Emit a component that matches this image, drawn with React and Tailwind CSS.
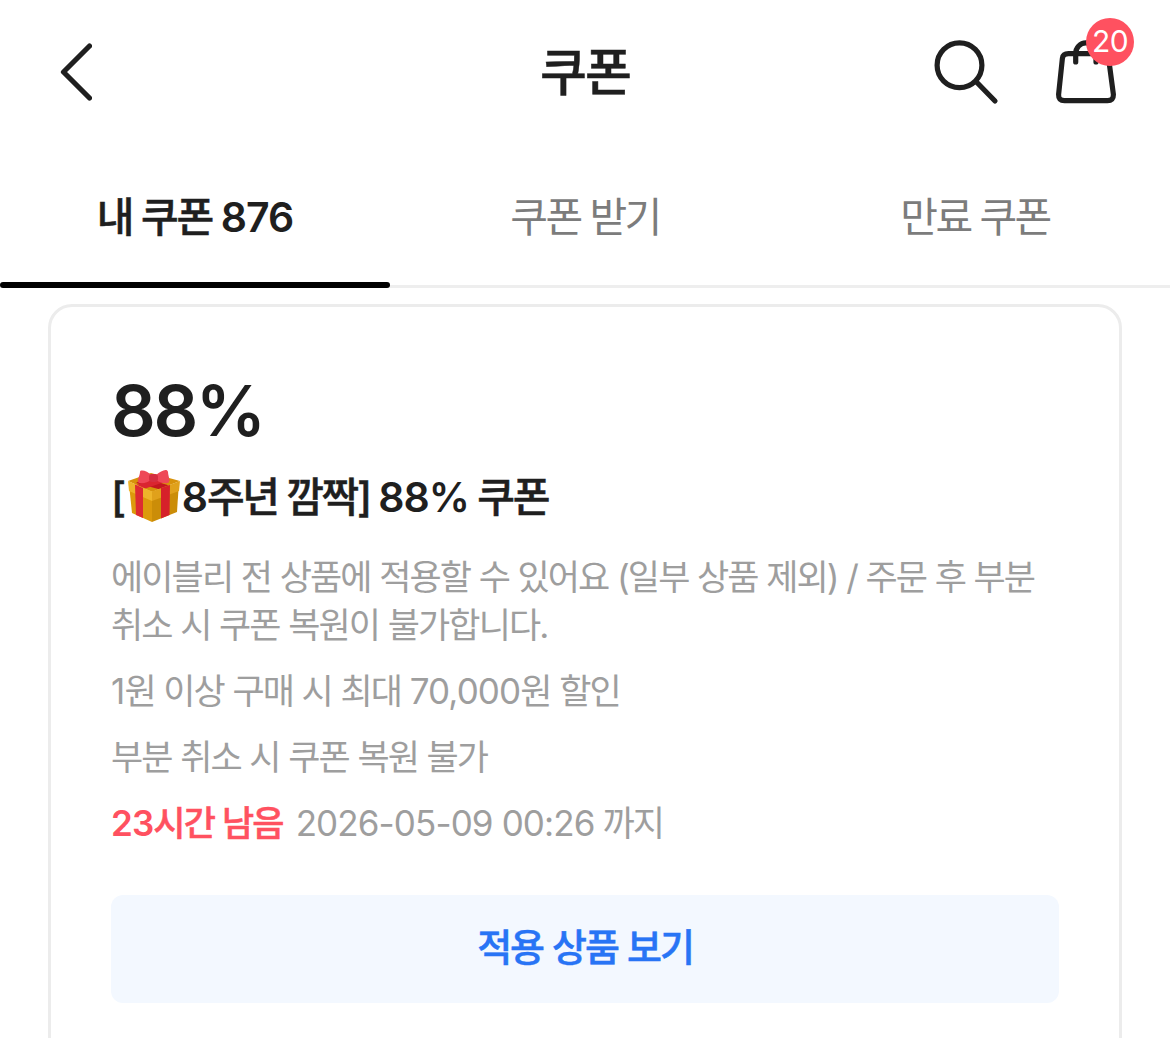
import React from 'react';
import { clsx } from 'clsx';

const TABS = [
    { id: 'mine', label: '내 쿠폰 876' },
    { id: 'get', label: '쿠폰 받기' },
    { id: 'expired', label: '만료 쿠폰' },
];

const coupon = {
    rate: '88%',
    lines: [
        '에이블리 전 상품에 적용할 수 있어요 (일부 상품 제외) / 주문 후 부분 취소 시 쿠폰 복원이 불가합니다.',
        '1원 이상 구매 시 최대 70,000원 할인',
        '부분 취소 시 쿠폰 복원 불가',
    ],
    remaining: '23시간 남음',
    until: '2026-05-09 00:26 까지',
};

// Semibold hangul: medium weight with a hairline outline, bold is too heavy
const STRONG = 'font-medium [-webkit-text-stroke:0.5px_currentColor]';

// Hangul is tracked tightly by its parent, numbers need a looser setting
function Ko({ children, strong }) {
    return children.split(/(\d[\d:,%-]*(?: \d[\d:]*)?)/).map((part, i) => (
        i % 2 === 1
            ? <span key={i} className={clsx('tracking-[-0.025em]', strong && 'font-semibold [-webkit-text-stroke:0]')}>{part}</span>
            : part
    ));
}

function BackIcon() {
    return (
        <svg className="w-9 h-16" viewBox="0 0 36 64" fill="none" stroke="#1f1f1f" strokeWidth="5.2" strokeLinecap="round" strokeLinejoin="round">
            <path d="M33.5 6 L7.5 32 L33.5 58" />
        </svg>
    );
}

function SearchIcon() {
    return (
        <svg className="size-[72px]" viewBox="0 0 72 72" fill="none" stroke="#1f1f1f" strokeWidth="5.2" strokeLinecap="round">
            <circle cx="29.5" cy="29.3" r="22.4" />
            <path d="M46 45.5 L65 65" />
        </svg>
    );
}

function BagIcon() {
    return (
        <svg className="size-[72px]" viewBox="0 0 72 72" fill="none" stroke="#1f1f1f" strokeWidth="5.2" strokeLinecap="round" strokeLinejoin="round">
            <path d="M18.5 17.7 H53.5 Q58.2 17.7 58.6 22.3 L63.4 58.5 Q63.6 64.7 57.5 64.7 H14.5 Q8.3 64.7 8.6 58.5 L12.4 22.3 Q13 17.7 18.5 17.7 Z" />
            <path d="M25.7 26 V17.5 A10 10.5 0 0 1 46 17.5 V26" />
        </svg>
    );
}

function GiftIcon() {
    return (
        <svg className="inline-block size-[54px] ml-[3px] mr-px -mt-2.5 align-middle" viewBox="0 0 54 54">
            <path d="M2.5 20 L25 28 V53 L5 44 Z" fill="#dc9a0c" />
            <path d="M51.5 20 L25 28 V53 L50 43 Z" fill="#cb8d08" />
            <path d="M1 12 L24 4 L53 12 L25 23 Z" fill="#d7920b" />
            <path d="M9 14 L17 9 L44 17 L35 21 Z" fill="#c4161f" />
            <path d="M35 8 L43 11 L17 20 L9 16 Z" fill="#da2530" />
            <path d="M1 12 L25 22.5 V32 L2 22 Z" fill="#eeb52a" />
            <path d="M53 12 L25 22.5 V32 L52 22 Z" fill="#e0a11b" />
            <path d="M8 15.5 L16 19 V49 L9 46 Z" fill="#dd2a32" />
            <path d="M34 19 L43 16 L42.5 46 L34 49.5 Z" fill="#d6212a" />
            <path d="M24 6 C21 2 13 0 13 3 C13 7 9 12 12 14 C17 15 21 13 24 11 Z" fill="#ee4857" />
            <path d="M29 6 C34 2 40 -1 41 3 C41 7 44 12 41 14 C36 15 32 13 29 11 Z" fill="#ee4857" />
            <rect x="22" y="5" width="9" height="8" rx="3" fill="#d52e40" />
        </svg>
    );
}

function Header() {
    return (
        <header className="grid grid-cols-3 items-center h-36">
            <button className="justify-self-start ml-14"><BackIcon /></button>
            <h1 className={clsx('justify-self-center text-[51px] leading-none tracking-[-0.04em]', STRONG)}>쿠폰</h1>
            <div className="justify-self-end flex gap-12 mr-12">
                <button><SearchIcon /></button>
                <button className="relative">
                    <BagIcon />
                    <span className="absolute -top-[18px] -right-3 size-12 rounded-full bg-[#ff5160] text-white text-[30px] leading-[46px] text-center tracking-[-0.02em]">20</span>
                </button>
            </div>
        </header>
    );
}

function Tabs({ current }) {
    return (
        <nav className="grid grid-cols-3 h-36 border-b-3 border-[#eeeeee]">
            {TABS.map((tab) => {
                const isActive = tab.id === current;
                return (
                    <button
                        key={tab.id}
                        className={clsx(
                            'flex flex-col items-center -mb-[3px] text-[41px]',
                            isActive ? STRONG : 'text-[#7c7c7c]',
                            isActive ? 'tracking-[-0.054em]' : 'tracking-[-0.063em]'
                        )}
                    >
                        <span className="flex-1 pt-[41px] leading-[64px] whitespace-pre"><Ko strong={isActive}>{tab.label}</Ko></span>
                        {isActive && <span className="w-full h-1.5 bg-black rounded-full" />}
                    </button>
                );
            })}
        </nav>
    );
}

function CouponCard() {
    return (
        <section className="mx-12 mt-4 h-[780px] px-[60px] pt-[60px] border-3 border-[#ececec] rounded-3xl">
            <p className="text-[70px] leading-[88px] font-semibold tracking-[-0.034em]">{coupon.rate}</p>
            <h2 className={clsx('mt-[9px] h-[66px] text-[41px] leading-[66px] tracking-[-0.058em] whitespace-nowrap', STRONG)}>
                [<GiftIcon /><Ko strong>8주년 깜짝] 88% 쿠폰</Ko>
            </h2>
            <div className="mt-[23px] space-y-[18px] text-[35px] leading-[48px] tracking-[-0.054em] text-[#9e9e9e] [word-spacing:0.6px]">
                {coupon.lines.map((line) => <p key={line}><Ko>{line}</Ko></p>)}
                <p className="flex gap-[13px]">
                    <strong className={clsx('text-[#ff5160]', STRONG)}><Ko strong>{coupon.remaining}</Ko></strong>
                    <span className="[word-spacing:0]"><Ko>{coupon.until}</Ko></span>
                </p>
            </div>
            <button className={clsx('mt-[48px] w-full h-[108px] pb-[3px] rounded-xl bg-[#f3f8ff] text-[38px] tracking-[-0.054em] [word-spacing:1px] text-[#2874f5]', STRONG)}>
                적용 상품 보기
            </button>
        </section>
    );
}

export default function App() {
    return (
        <main className="h-[1038px] overflow-hidden bg-white text-[#1f1f1f] font-['Inter','Noto_Sans_CJK_KR',sans-serif]">
            <Header />
            <Tabs current="mine" />
            <CouponCard />
        </main>
    );
}
